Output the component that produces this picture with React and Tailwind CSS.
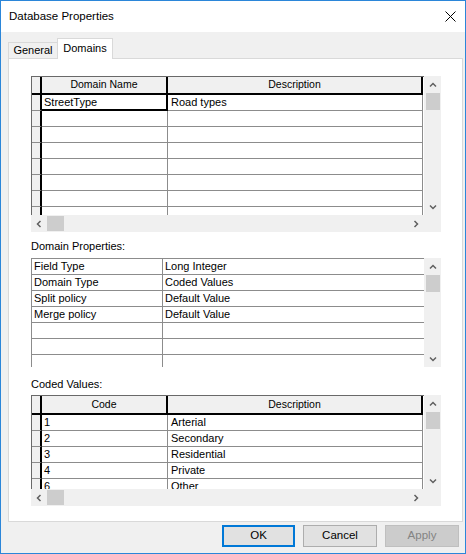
import React from 'react';

const LINE = 'border-[#8c8c8c]';

const Chevron = ({ dir }) => {
  const pts = {
    up: '1,5.5 4,2.5 7,5.5',
    down: '1,2.5 4,5.5 7,2.5',
    left: '5.5,1 2.5,4 5.5,7',
    right: '2.5,1 5.5,4 2.5,7',
  }[dir];
  return (
    <svg width="8" height="8" viewBox="0 0 8 8">
      <polyline points={pts} fill="none" stroke="#606060" strokeWidth="1.5" />
    </svg>
  );
};

const VScroll = () => (
  <div className="w-[17px] bg-[#f0f0f0] flex flex-col shrink-0">
    <div className="h-[17px] shrink-0 flex items-center justify-center"><Chevron dir="up" /></div>
    <div className="h-[17px] shrink-0 ml-[2px] mr-px bg-[#cdcdcd]" />
    <div className="flex-1" />
    <div className="h-[17px] shrink-0 flex items-center justify-center"><Chevron dir="down" /></div>
  </div>
);

const HScroll = () => (
  <div className="h-[17px] flex shrink-0">
    <div className="w-[393px] bg-[#f0f0f0] flex">
      <div className="w-[16px] flex items-center justify-center"><Chevron dir="left" /></div>
      <div className="w-[17px] my-px bg-[#cdcdcd]" />
      <div className="flex-1" />
      <div className="w-[17px] flex items-center justify-center"><Chevron dir="right" /></div>
    </div>
    <div className="w-[17px] bg-[#f0f0f0]" />
  </div>
);

// grid with row selectors, a header row and both scrollbars
const TableGrid = ({ columns, rows, bodyH, headerH, selected }) => (
  <div className="flex flex-col w-[410px]">
    <div className="flex" style={{ height: bodyH }}>
      <div className="w-[393px] bg-white border-l border-t border-[#696969] overflow-hidden">
        <div className="flex" style={{ height: headerH }}>
          <div className="w-[10px] bg-[#f0f0f0] border-r-2 border-b-2 border-black" />
          <div className="w-[126px] bg-[#f0f0f0] border-r-2 border-b-2 border-black flex items-center justify-center text-[10.5px]">
            {columns[0]}
          </div>
          <div className="w-[255px] bg-[#f0f0f0] border-r-2 border-b-2 border-black flex items-center justify-center text-[10.5px]">
            {columns[1]}
          </div>
        </div>
        {rows.map((row, i) => (
          <div key={i} className="flex h-[16px] shrink-0">
            <div className="w-[10px] bg-[#f0f0f0] border-r-2 border-r-black border-b border-b-[#8c8c8c]" />
            <div
              className={`w-[126px] flex items-center pl-[2px] overflow-hidden whitespace-nowrap ${
                selected === i ? 'border-r-2 border-b-2 border-black' : `border-r border-b ${LINE}`
              }`}
            >
              {row[0]}
            </div>
            <div className={`w-[255px] flex items-center pl-[3px] overflow-hidden whitespace-nowrap border-r border-b ${LINE}`}>
              {row[1]}
            </div>
          </div>
        ))}
      </div>
      <VScroll />
    </div>
    <HScroll />
  </div>
);

const PropGrid = ({ rows }) => (
  <div className="flex w-[410px] h-[109px]">
    <div className={`w-[393px] bg-white border-l border-t ${LINE} overflow-hidden`}>
      {rows.map((row, i) => (
        <div key={i} className="flex h-[16px] shrink-0">
          <div className={`w-[131px] flex items-center pl-[2px] border-r border-b ${LINE} whitespace-nowrap`}>{row[0]}</div>
          <div className={`w-[261px] flex items-center pl-[2px] border-b ${LINE} whitespace-nowrap`}>{row[1]}</div>
        </div>
      ))}
    </div>
    <VScroll />
  </div>
);

const pad = (list, n) => [...list, ...Array(Math.max(0, n - list.length)).fill(['', ''])];

export default function App() {
  const domains = pad([['StreetType', 'Road types']], 8);
  const props = pad(
    [
      ['Field Type', 'Long Integer'],
      ['Domain Type', 'Coded Values'],
      ['Split policy', 'Default Value'],
      ['Merge policy', 'Default Value'],
    ],
    7
  );
  const codes = [
    ['1', 'Arterial'],
    ['2', 'Secondary'],
    ['3', 'Residential'],
    ['4', 'Private'],
    ['6', 'Other'],
  ];

  return (
    <div className="w-[466px] h-[554px] border border-[#2b86d9] bg-[#f0f0f0] flex flex-col font-['Liberation_Sans',Arial,sans-serif] text-[11px] text-black">
      {/* Title bar */}
      <div className="h-[31px] shrink-0 bg-white flex items-center justify-between pl-[8px] pr-[9px]">
        <span className="text-[11.5px]">Database Properties</span>
        <svg width="11" height="11" viewBox="0 0 11 11">
          <path d="M0.5 0.5 L10.5 10.5 M10.5 0.5 L0.5 10.5" stroke="#000" strokeWidth="1" />
        </svg>
      </div>

      {/* Tabs */}
      <div className="h-[20px] mt-[6px] shrink-0 flex items-end pl-[7px]">
        <div className="w-[49px] h-[16px] border-l border-t border-[#d9d9d9] bg-[#f0f0f0] flex items-center justify-center">
          General
        </div>
        <div className="relative z-10 w-[56px] h-[21px] -mb-px border-l border-t border-r border-[#d9d9d9] bg-white flex items-center justify-center pb-[2px]">
          Domains
        </div>
      </div>

      {/* Tab page */}
      <div className="ml-[7px] w-[455px] h-[464px] shrink-0 bg-white border border-[#d9d9d9] pl-[22px] pt-[17px]">
        <TableGrid columns={['Domain Name', 'Description']} rows={domains} bodyH={139} headerH={18} selected={0} />

        <div className="mt-[7px] h-[14px] leading-[14px]">Domain Properties:</div>
        <div className="mt-[5px]">
          <PropGrid rows={props} />
        </div>

        <div className="mt-[10px] h-[14px] leading-[14px]">Coded Values:</div>
        <div className="mt-[4px]">
          <TableGrid columns={['Code', 'Description']} rows={codes} bodyH={94} headerH={19} />
        </div>
      </div>

      {/* Buttons */}
      <div className="mt-[3px] h-[22px] shrink-0 flex justify-end gap-[8px] pr-[6px]">
        <button className="w-[73px] h-[22px] border-2 border-[#0078d7] bg-[#e1e1e1] text-[11.5px]">OK</button>
        <button className="w-[74px] h-[22px] border border-[#adadad] bg-[#e1e1e1] text-[11.5px]">Cancel</button>
        <button className="w-[74px] h-[22px] border border-[#bfbfbf] bg-[#cccccc] text-[#838383] text-[11.5px]" disabled>
          Apply
        </button>
      </div>
    </div>
  );
}
